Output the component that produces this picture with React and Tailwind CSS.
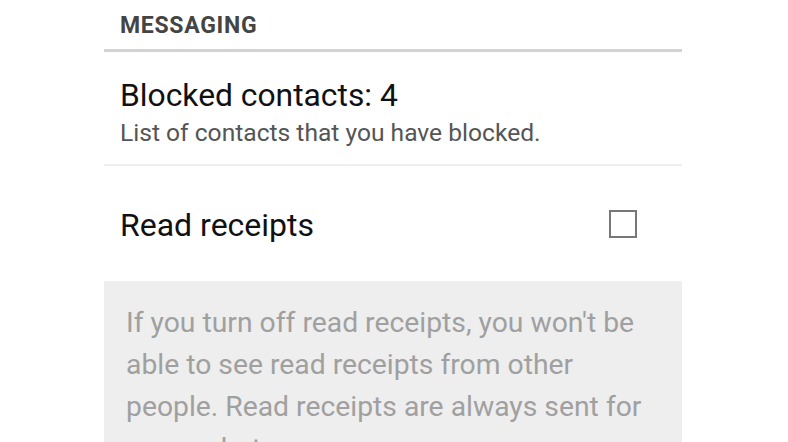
import React from 'react';

const App = () => {
  return (
    <div className="h-[442px] w-[788px] overflow-hidden bg-white" style={{ fontFamily: 'Roboto, "Noto Sans", sans-serif' }}>
      <div className="ml-[104px] w-[578px]">
        <div className="h-[52px] border-b-[3px] border-[#d3d3d3] pl-4 pt-[14px]">
          <h2 className="text-[23px] leading-[23px] font-bold tracking-[0.7px] text-[#444]">MESSAGING</h2>
        </div>
        <div className="h-[114px] border-b-2 border-[#efefef] pl-4 pt-[27px]">
          <div className="text-[31.8px] leading-[32px] text-[#111]">Blocked contacts: 4</div>
          <div className="mt-[10px] text-[24.6px] leading-[24px] text-[#555]">List of contacts that you have blocked.</div>
        </div>
        <div className="flex h-[115px] items-center justify-between pl-4 pr-[45px]">
          <span className="mt-[3px] text-[32px] leading-[32px] text-[#111]">Read receipts</span>
          <span className="block h-[28px] w-[28px] border-2 border-[#777] bg-white" />
        </div>
        <div className="bg-[#eeeeee] pl-[22px] pr-[22px] pt-[21px] pb-6">
          <p className="text-[28.3px] leading-[42px] text-[#a0a0a0]">
            If you turn off read receipts, you won't be able to see read receipts from other people. Read receipts are always sent for group chats.
          </p>
        </div>
      </div>
    </div>
  );
};

export default App;
